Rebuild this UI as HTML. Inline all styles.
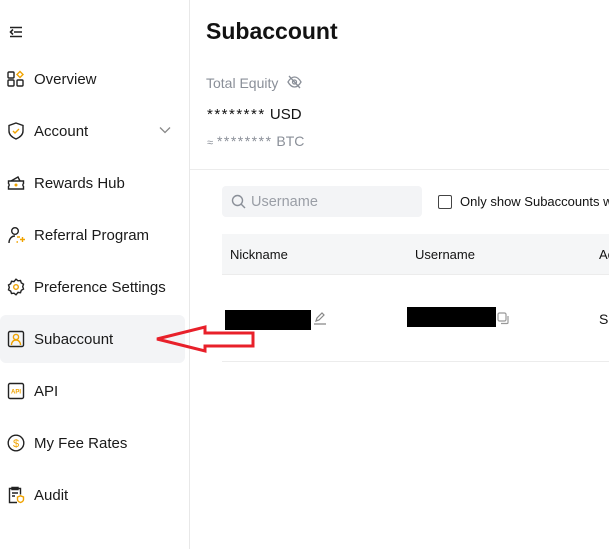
<!DOCTYPE html>
<html><head><meta charset="utf-8"><style>
*{margin:0;padding:0;box-sizing:border-box}
body{width:609px;height:549px;overflow:hidden;background:#fff;font-family:"Liberation Sans",sans-serif;color:#121212;position:relative}
.side{position:absolute;left:0;top:0;width:190px;height:549px;border-right:1px solid #e8e8e8}
.item{position:absolute;left:0;width:185px;height:48px;display:flex;align-items:center;font-size:15px;color:#1a1a1a}
.item svg{position:absolute;left:7px;top:15px}
.item span{position:absolute;left:34px;top:16px}
.act{background:#f3f4f6;border-radius:6px}
.abs{position:absolute}
</style></head><body>
<div class="side">
<svg class="abs" style="left:9px;top:26px" width="14" height="12" viewBox="0 0 14 12" fill="none" stroke="#222" stroke-width="1.6"><path d="M1 1.5h12M5 6h8M1 10.5h12M4 3.5L1.5 6 4 8.5"/></svg>
<div class="item" style="top:55px"><svg width="18" height="18" viewBox="0 0 18 18" fill="none" stroke="#222" stroke-width="1.4"><rect x="1" y="2" width="6" height="6" rx="1"/><rect x="1" y="10" width="6" height="6" rx="1"/><rect x="10" y="10" width="6" height="6" rx="1"/><path d="M13 1.5l3 3-3 3-3-3z" stroke="#f0a300"/></svg><span>Overview</span></div>
<div class="item" style="top:107px"><svg width="18" height="18" viewBox="0 0 18 18" fill="none" stroke="#222" stroke-width="1.4"><path d="M9 1l7 2.5v5.5c0 4-3.5 6.5-7 8-3.5-1.5-7-4-7-8V3.5z"/><path d="M6 9l2 2 4-4" stroke="#f0a300"/></svg><span>Account</span>
<svg style="left:159px;top:19px" width="12" height="8" viewBox="0 0 12 8" fill="none" stroke="#888" stroke-width="1.3"><path d="M1 1.5l5 5 5-5"/></svg></div>
<div class="item" style="top:159px"><svg width="18" height="18" viewBox="0 0 18 18" fill="none" stroke="#222" stroke-width="1.4"><path d="M1.5 7h15v2.5a2 2 0 000 3V15h-15v-2.5a2 2 0 000-3z"/><path d="M4 7l7-4 2 4"/><circle cx="9" cy="11" r="1.5" fill="#f0a300" stroke="none"/></svg><span>Rewards Hub</span></div>
<div class="item" style="top:211px"><svg width="18" height="18" viewBox="0 0 18 18" fill="none" stroke="#222" stroke-width="1.4"><circle cx="8" cy="5" r="3.3"/><path d="M2 17c0-4 2.5-7 6-7"/><path d="M10 11h3M11 16h-1.5 M15.5 11v5M13 13.5h5" stroke="#f0a300"/></svg><span>Referral Program</span></div>
<div class="item" style="top:263px"><svg width="18" height="18" viewBox="0 0 18 18" fill="none" stroke="#222" stroke-width="1.4"><path d="M9 1.2l2 1.6 2.5-.3.8 2.4 2.2 1.3-.8 2.4.8 2.4-2.2 1.3-.8 2.4-2.5-.3L9 16.8l-2-1.6-2.5.3-.8-2.4-2.2-1.3.8-2.4-.8-2.4 2.2-1.3.8-2.4 2.5.3z"/><circle cx="9" cy="9" r="2.3" stroke="#f0a300"/></svg><span>Preference Settings</span></div>
<div class="item act" style="top:315px"><svg width="18" height="18" viewBox="0 0 18 18" fill="none" stroke="#222" stroke-width="1.4"><rect x="1.5" y="1.5" width="15" height="15" rx="1.5"/><circle cx="9" cy="7" r="2.6" stroke="#f0a300"/><path d="M4.5 15c0-3 2-5 4.5-5s4.5 2 4.5 5" stroke="#f0a300"/></svg><span>Subaccount</span></div>
<div class="item" style="top:367px"><svg width="18" height="18" viewBox="0 0 18 18" fill="none" stroke="#222" stroke-width="1.4"><rect x="1.5" y="1.5" width="15" height="15" rx="1.5"/><text x="9" y="11.5" font-size="6" font-weight="bold" fill="#f0a300" stroke="none" text-anchor="middle" font-family="Liberation Sans">API</text></svg><span>API</span></div>
<div class="item" style="top:419px"><svg width="18" height="18" viewBox="0 0 18 18" fill="none" stroke="#222" stroke-width="1.4"><circle cx="9" cy="9" r="7.8"/><text x="9" y="13" font-size="11" fill="#f0a300" stroke="none" text-anchor="middle" font-family="Liberation Sans">$</text></svg><span>My Fee Rates</span></div>
<div class="item" style="top:471px"><svg width="18" height="18" viewBox="0 0 18 18" fill="none" stroke="#222" stroke-width="1.4"><path d="M10 16.5H2.5v-14h11v6"/><path d="M5 1.5h6v2H5z M5 7h6M5 10h3"/><path d="M10.5 11l3-1.2 3 1.2v2.5c0 1.5-1.5 2.5-3 3-1.5-.5-3-1.5-3-3z" stroke="#f0a300"/></svg><span>Audit</span></div>
</div>

<div class="abs" style="left:206px;top:18px;font-size:23px;font-weight:bold">Subaccount</div>
<div class="abs" style="left:206px;top:75px;font-size:14px;color:#8a8f98">Total Equity</div>
<svg class="abs" style="left:287px;top:75px" width="15" height="14" viewBox="0 0 15 14" fill="none" stroke="#8a8f98" stroke-width="1.3"><path d="M1 7c2-3.5 4-5 6.5-5s4.5 1.5 6.5 5c-2 3.5-4 5-6.5 5S3 10.5 1 7z"/><circle cx="7.5" cy="7" r="2"/><path d="M2 1l11 12"/></svg>
<div class="abs" style="left:207px;top:106px;font-size:15px;letter-spacing:1.5px">********<span style="letter-spacing:0"> USD</span></div>
<div class="abs" style="left:207px;top:133px;font-size:14px;color:#8a8f98"><span style="font-size:11px">≈</span> <span style="letter-spacing:1.5px">********</span> BTC</div>
<div class="abs" style="left:190px;top:169px;width:419px;height:1px;background:#ececec"></div>
<div class="abs" style="left:222px;top:186px;width:200px;height:31px;background:#f3f4f6;border-radius:4px"></div>
<svg class="abs" style="left:231px;top:194px" width="15" height="15" viewBox="0 0 15 15" fill="none" stroke="#8a8f98" stroke-width="1.4"><circle cx="6.5" cy="6.5" r="5"/><path d="M10 10l4 4"/></svg>
<div class="abs" style="left:251px;top:194px;font-size:14.5px;color:#9a9ea6">Username</div>
<div class="abs" style="left:438px;top:195px;width:14px;height:14px;border:1.3px solid #444;border-radius:2px"></div>
<div class="abs" style="left:460px;top:194px;font-size:13px;white-space:nowrap">Only show Subaccounts w</div>
<div class="abs" style="left:222px;top:234px;width:387px;height:41px;background:#f5f6f7;border-bottom:1px solid #ececec"></div>
<div class="abs" style="left:230px;top:247px;font-size:13px">Nickname</div>
<div class="abs" style="left:415px;top:247px;font-size:13px">Username</div>
<div class="abs" style="left:599px;top:247px;font-size:13px">Ac</div>
<div class="abs" style="left:225px;top:310px;width:86px;height:20px;background:#000"></div>
<svg class="abs" style="left:313px;top:311px" width="14" height="14" viewBox="0 0 14 14" fill="none" stroke="#888" stroke-width="1.2"><path d="M3 10l1-3 5-5 2 2-5 5zM1 13h12"/></svg>
<div class="abs" style="left:407px;top:307px;width:89px;height:20px;background:#000"></div>
<svg class="abs" style="left:497px;top:312px" width="13" height="13" viewBox="0 0 13 13" fill="none" stroke="#999" stroke-width="1.2"><rect x="1" y="1" width="8" height="8" rx="1.5"/><path d="M11 4v6.5a1 1 0 01-1 1H4"/></svg>
<div class="abs" style="left:599px;top:311px;font-size:14px">S</div>
<div class="abs" style="left:222px;top:361px;width:387px;height:1px;background:#ececec"></div>
<svg class="abs" style="left:0;top:0" width="609" height="549"><path d="M157 339L205 327V333H253V346H205V351Z" fill="none" stroke="#e8202a" stroke-width="3" stroke-linejoin="miter"/></svg>
</body></html>
